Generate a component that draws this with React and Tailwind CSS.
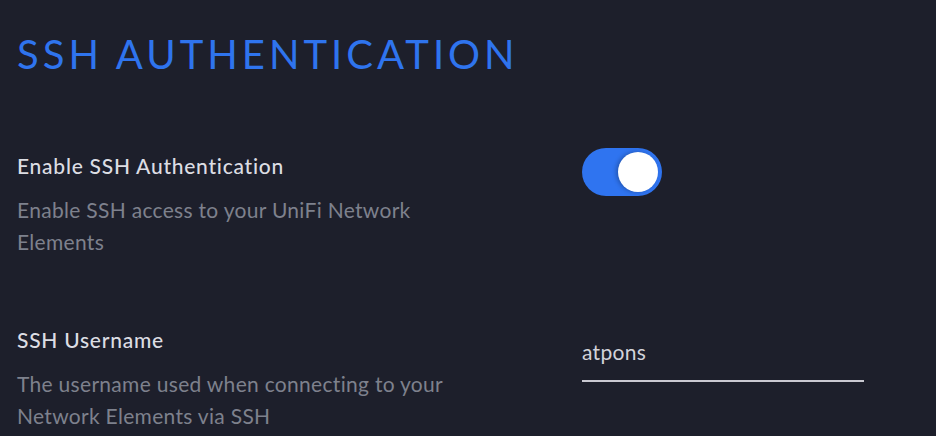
import React, { useState } from "react";

function Row({ title, desc, children }) {
  return (
    <div className="flex">
      <div className="w-[565px] shrink-0">
        <div className="text-[21px] leading-[32px] font-medium tracking-[0.75px] text-[#dcdde3]">
          {title}
        </div>
        <div className="mt-[12px] w-[450px] text-[21px] leading-[32px] tracking-[0.3px] text-[#7e818d]">
          {desc}
        </div>
      </div>
      <div className="flex-1">{children}</div>
    </div>
  );
}

export default function App() {
  const [enabled, setEnabled] = useState(true);
  const [username, setUsername] = useState("atpons");

  return (
    <div
      className="w-[936px] h-[436px] overflow-hidden bg-[#1d1f2b] pl-[17px] pt-[30px]"
      style={{ fontFamily: "Lato, 'Open Sans', sans-serif" }}
    >
      {/* Header */}
      <h1 className="text-[40px] leading-[48px] tracking-[0.1em] text-[#2f74ee]">
        SSH AUTHENTICATION
      </h1>

      <div className="mt-[72px] flex flex-col gap-[66px]">
        <Row
          title="Enable SSH Authentication"
          desc="Enable SSH access to your UniFi Network Elements"
        >
          <button
            type="button"
            onClick={() => setEnabled(!enabled)}
            className={`mt-[-2px] flex h-[48px] w-[80px] items-center rounded-full px-[4px] ${
              enabled ? "justify-end bg-[#2f74f0]" : "justify-start bg-[#3a3d4b]"
            }`}
          >
            <span className="h-[40px] w-[40px] rounded-full bg-white shadow-[-2px_0_4px_rgba(0,0,0,0.25)]"></span>
          </button>
        </Row>

        <Row
          title="SSH Username"
          desc="The username used when connecting to your Network Elements via SSH"
        >
          <input
            value={username}
            onChange={(e) => setUsername(e.target.value)}
            className="mt-[14px] w-[282px] border-b-2 border-[#c9c9d1] bg-transparent pb-[14px] text-[21px] leading-[28px] tracking-[0.3px] text-[#d2d3da] outline-none"
          />
        </Row>
      </div>
    </div>
  );
}
